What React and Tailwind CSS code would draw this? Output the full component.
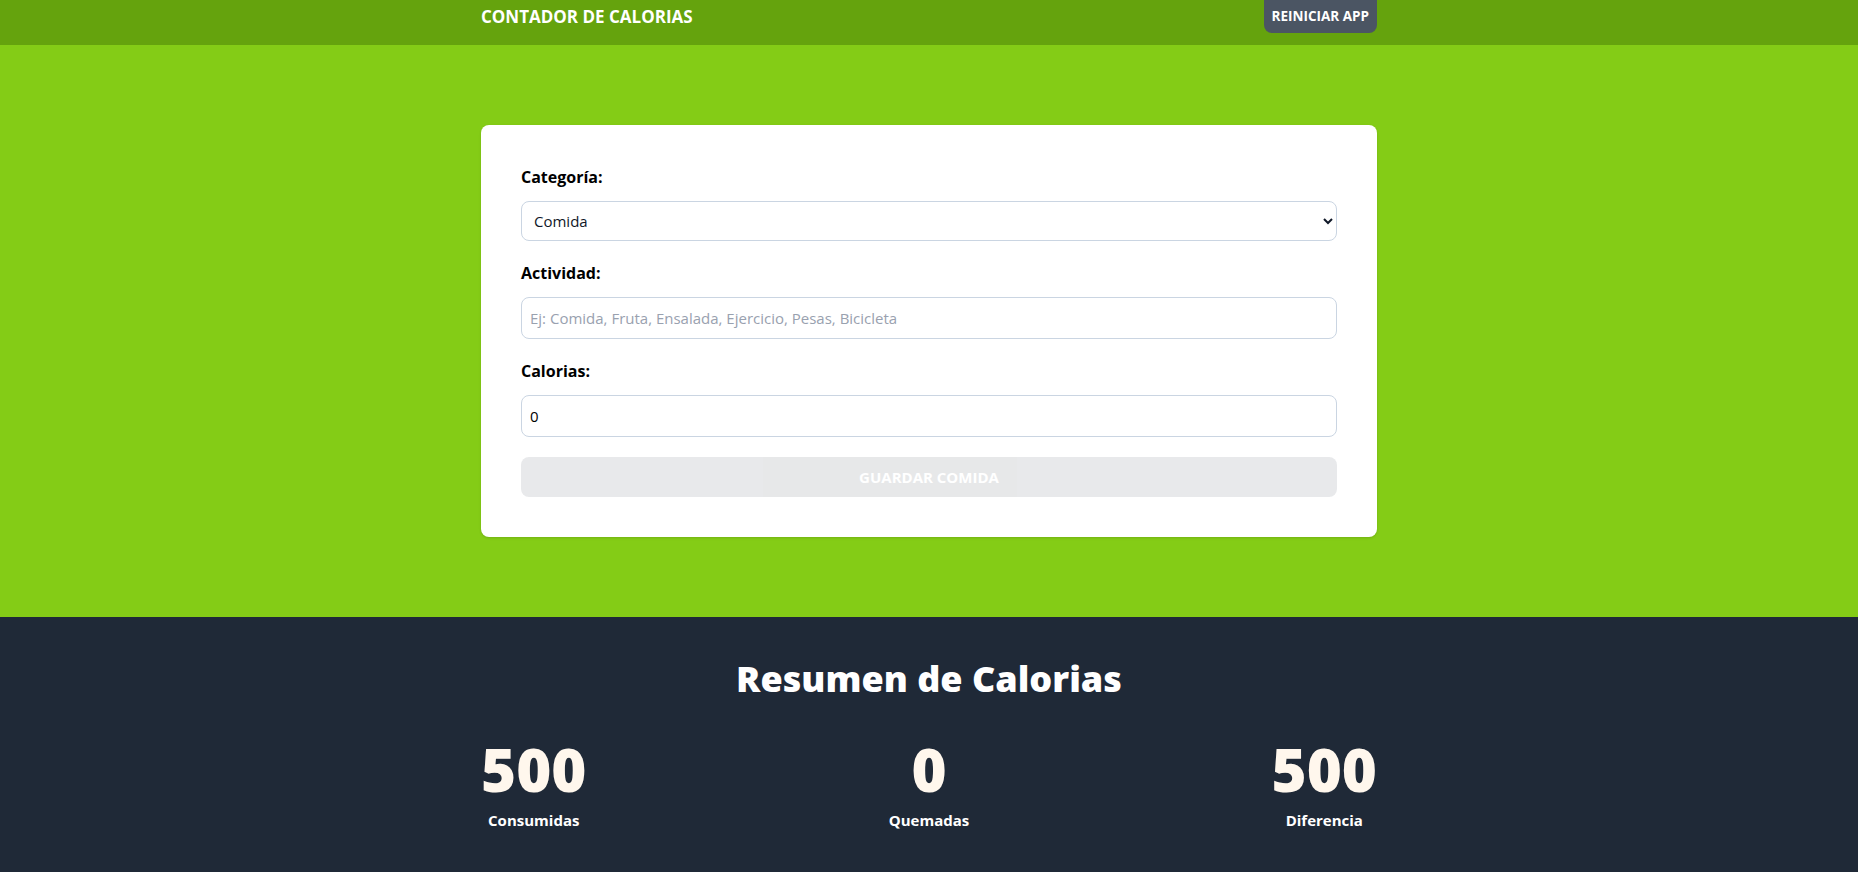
import { useState } from 'react';

export default function App() {
  const [form, setForm] = useState({ category: 1, name: '', calories: 0 });

  const isValid = form.name.trim() !== '' && form.calories > 0;

  return (
    <div className="font-['Open_Sans',sans-serif]">
      <header className="h-[45px] bg-[#65a30d]">
        <div className="max-w-4xl mx-auto flex justify-between items-start">
          <h1 className="text-[17px] leading-[33px] font-bold text-white uppercase">Contador de Calorias</h1>
          <button className="h-[33px] px-[8px] text-[13.5px] font-bold text-white uppercase bg-[#4b5563] rounded-b-lg">
            Reiniciar App
          </button>
        </div>
      </header>

      <section className="py-20 bg-[#84cc16]">
        <div className="max-w-4xl mx-auto">
          <form className="p-10 space-y-5 bg-white rounded-lg shadow">
            <div className="space-y-3">
              <label htmlFor="category" className="block font-bold text-black">Categoría:</label>
              <select
                id="category"
                value={form.category}
                onChange={(e) => setForm({ ...form, category: +e.target.value })}
                className="w-full h-10 px-2 text-[15px] text-gray-900 bg-white border border-slate-300 rounded-lg"
              >
                <option value={1}>Comida</option>
                <option value={2}>Ejercicio</option>
              </select>
            </div>

            <div className="space-y-3">
              <label htmlFor="name" className="block font-bold text-black">Actividad:</label>
              <input
                id="name"
                type="text"
                value={form.name}
                onChange={(e) => setForm({ ...form, name: e.target.value })}
                className="w-full h-[42px] px-2 text-[15px] border border-slate-300 rounded-lg placeholder:text-gray-400"
                placeholder="Ej: Comida, Fruta, Ensalada, Ejercicio, Pesas, Bicicleta"
              />
            </div>

            <div className="space-y-3">
              <label htmlFor="calories" className="block font-bold text-black">Calorias:</label>
              <input
                id="calories"
                type="number"
                value={form.calories}
                onChange={(e) => setForm({ ...form, calories: +e.target.value })}
                className="w-full h-[42px] px-2 text-[15px] border border-slate-300 rounded-lg"
              />
            </div>

            <button
              type="submit"
              disabled={!isValid}
              className="w-full h-10 text-[15px] font-bold text-white uppercase bg-[#1f2937] rounded-lg disabled:opacity-10"
            >
              Guardar Comida
            </button>
          </form>
        </div>
      </section>

      <section className="pt-[42px] pb-10 bg-[#1f2937]">
        <div className="max-w-4xl mx-auto">
          <h2 className="text-4xl font-black text-center text-white">Resumen de Calorias</h2>
          <div className="flex justify-between mt-10">
            {[
              ['500', 'Consumidas'],
              ['0', 'Quemadas'],
              ['500', 'Diferencia'],
            ].map(([value, label]) => (
              <p key={label} className="flex flex-col items-center gap-[10px] text-[15px] font-bold text-white">
                <span className="text-6xl leading-none font-black text-orange-50">{value}</span>
                {label}
              </p>
            ))}
          </div>
        </div>
      </section>
    </div>
  );
}
